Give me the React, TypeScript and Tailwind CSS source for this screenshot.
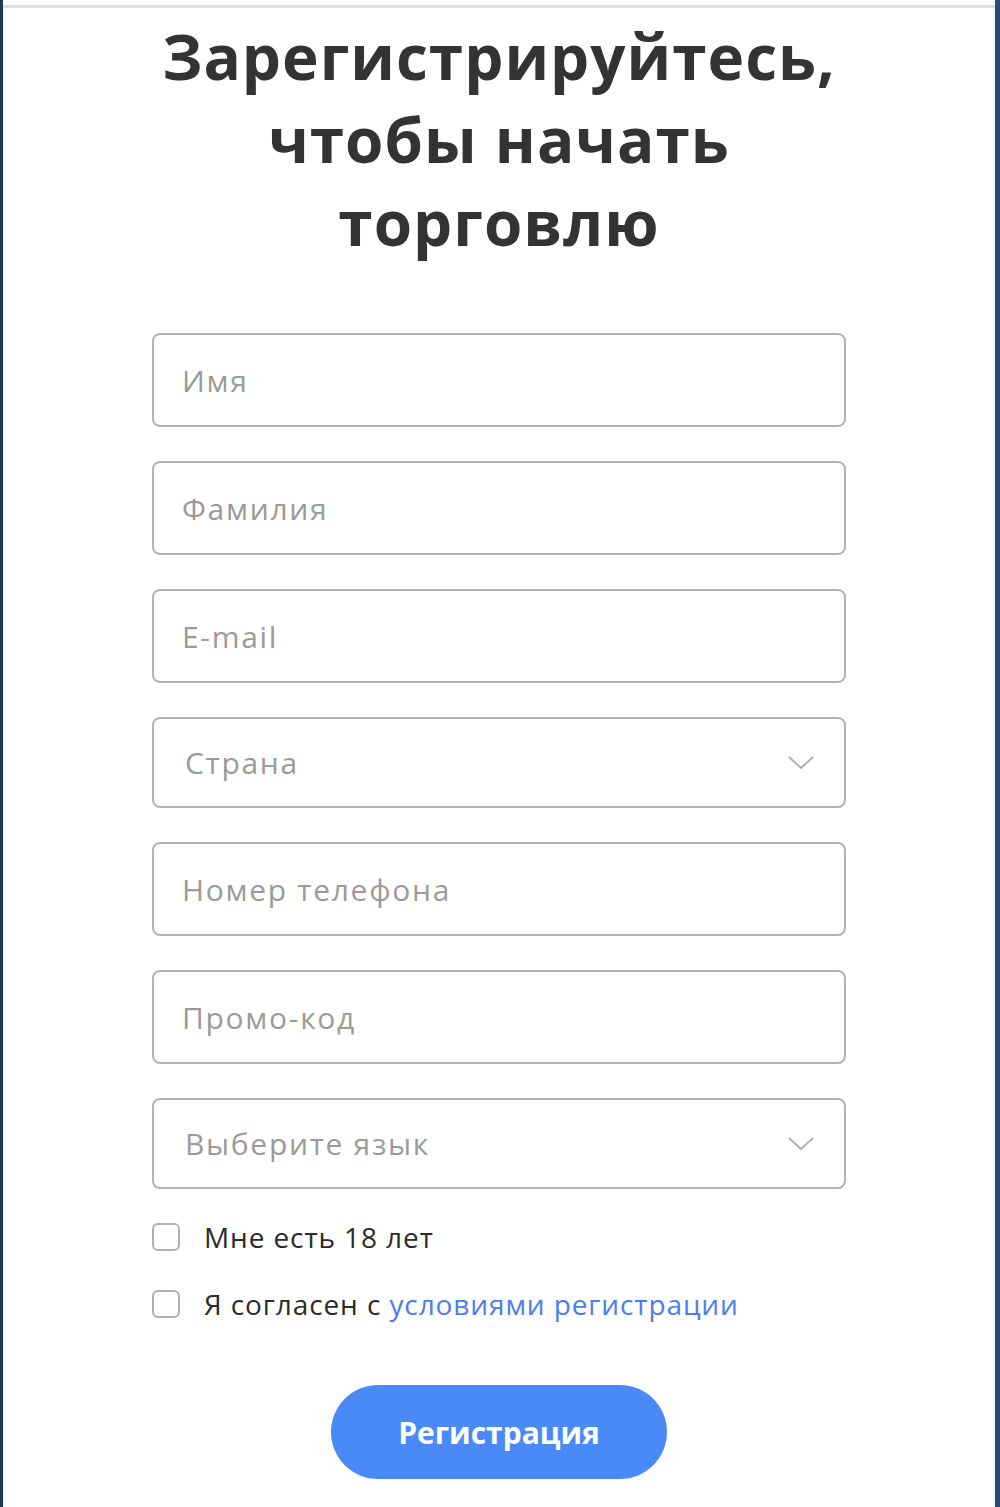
const fields = [
  { label: "Имя", select: false, h: "h-[94px]" },
  { label: "Фамилия", select: false, h: "h-[94px]" },
  { label: "E-mail", select: false, h: "h-[94px]" },
  { label: "Страна", select: true, h: "h-[91px]" },
  { label: "Номер телефона", select: false, h: "h-[94px]" },
  { label: "Промо-код", select: false, h: "h-[94px]" },
  { label: "Выберите язык", select: true, h: "h-[91px]" },
];

function Chevron() {
  return (
    <svg width="26" height="14" viewBox="0 0 26 14" fill="none">
      <polyline points="1.5,1.5 13,12 24.5,1.5" stroke="#b0b0b0" strokeWidth="2" strokeLinecap="round" strokeLinejoin="round" />
    </svg>
  );
}

function Field({ label, select, h }: { label: string; select: boolean; h: string }) {
  return (
    <div
      className={`flex ${h} w-full items-center justify-between rounded-[8px] border-2 border-[#b3b3b3] bg-white pl-[28px] pr-[30px]`}
    >
      <span className={`text-[30px] tracking-[1.7px] text-[#9a9a9a] ${select ? "pl-[3px]" : ""}`}>{label}</span>
      {select && <Chevron />}
    </div>
  );
}

function Check({ children }: { children: React.ReactNode }) {
  return (
    <label className="flex items-center gap-[24px]">
      <span className="h-[28px] w-[28px] rounded-[6px] border-2 border-[#b0b0b0] bg-white" />
      <span className="text-[28px] leading-[42px] tracking-[0.9px] text-[#2b2b2b]">{children}</span>
    </label>
  );
}

export default function App() {
  return (
    <div
      className="flex h-[1507px] w-[1000px] bg-[#1d3d63]"
      style={{ fontFamily: '"Open Sans", "Noto Sans", sans-serif' }}
    >
      <div className="flex w-[3px] bg-[#1b365a]" />
      <div className="flex flex-1 flex-col bg-white">
        <div className="h-[5px] bg-white" />
        <div className="h-[3px] bg-[#dedede]" />
        <div className="flex flex-1 flex-col items-center pt-[7px]">
          <h1 className="text-center text-[62px] leading-[83px] font-bold tracking-[1px] text-[#333333]">
            Зарегистрируйтесь,
            <br />
            чтобы начать
            <br />
            торговлю
          </h1>
          <div className="mt-[69px] flex w-[694px] flex-col gap-[34px]">
            {fields.map((f) => (
              <Field key={f.label} {...f} />
            ))}
          </div>
          <div className="mt-[27px] flex w-[694px] flex-col gap-[25px]">
            <Check>Мне есть 18 лет</Check>
            <Check>
              Я согласен с <span className="text-[#4a7ef0]">условиями регистрации</span>
            </Check>
          </div>
          <button className="mt-[60px] h-[94px] w-[336px] rounded-full bg-[#4a8af6] text-[30px] font-bold text-white">
            Регистрация
          </button>
        </div>
      </div>
      <div className="flex w-[5px] bg-[#2a4b78]" />
    </div>
  );
}
